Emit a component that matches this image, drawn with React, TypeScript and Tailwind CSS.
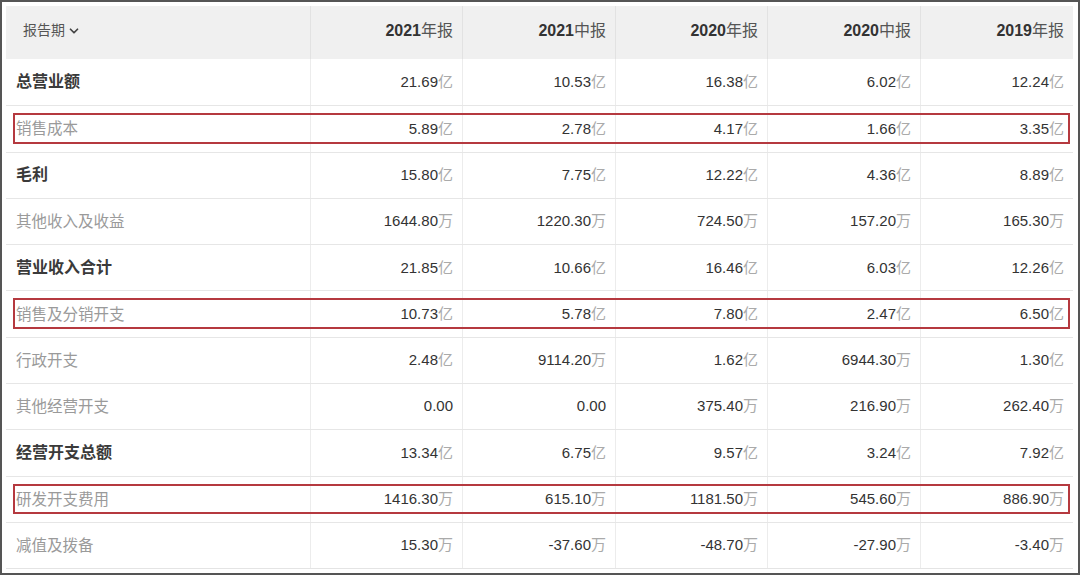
import { ChevronDown } from "lucide-react";

type Row = {
    label: string;
    bold?: boolean;
    boxed?: boolean;
    values: [string, string][];
};

const periods = [
    ["2021", "年报"],
    ["2021", "中报"],
    ["2020", "年报"],
    ["2020", "中报"],
    ["2019", "年报"]
];

const rows: Row[] = [
    { label: "总营业额", bold: true, values: [["21.69", "亿"], ["10.53", "亿"], ["16.38", "亿"], ["6.02", "亿"], ["12.24", "亿"]] },
    { label: "销售成本", boxed: true, values: [["5.89", "亿"], ["2.78", "亿"], ["4.17", "亿"], ["1.66", "亿"], ["3.35", "亿"]] },
    { label: "毛利", bold: true, values: [["15.80", "亿"], ["7.75", "亿"], ["12.22", "亿"], ["4.36", "亿"], ["8.89", "亿"]] },
    { label: "其他收入及收益", values: [["1644.80", "万"], ["1220.30", "万"], ["724.50", "万"], ["157.20", "万"], ["165.30", "万"]] },
    { label: "营业收入合计", bold: true, values: [["21.85", "亿"], ["10.66", "亿"], ["16.46", "亿"], ["6.03", "亿"], ["12.26", "亿"]] },
    { label: "销售及分销开支", boxed: true, values: [["10.73", "亿"], ["5.78", "亿"], ["7.80", "亿"], ["2.47", "亿"], ["6.50", "亿"]] },
    { label: "行政开支", values: [["2.48", "亿"], ["9114.20", "万"], ["1.62", "亿"], ["6944.30", "万"], ["1.30", "亿"]] },
    { label: "其他经营开支", values: [["0.00", ""], ["0.00", ""], ["375.40", "万"], ["216.90", "万"], ["262.40", "万"]] },
    { label: "经营开支总额", bold: true, values: [["13.34", "亿"], ["6.75", "亿"], ["9.57", "亿"], ["3.24", "亿"], ["7.92", "亿"]] },
    { label: "研发开支费用", boxed: true, values: [["1416.30", "万"], ["615.10", "万"], ["1181.50", "万"], ["545.60", "万"], ["886.90", "万"]] },
    { label: "减值及拨备", values: [["15.30", "万"], ["-37.60", "万"], ["-48.70", "万"], ["-27.90", "万"], ["-3.40", "万"]] }
];

const gridCols = "grid grid-cols-[305px_152px_153px_152px_153px_152px]";

const App = () => {
    return (
        <div
            className="w-[1080px] h-[575px] overflow-hidden bg-white border-2 border-[#555] pt-1 pl-1"
            style={{ fontFamily: '"Liberation Sans", Arial, "Noto Sans CJK SC", sans-serif' }}
        >
            <div className="w-[1067px] border-b border-[#e4e4e4]">
                {/* header */}
                <div className={`${gridCols} h-[53px] bg-[#f0f0f0]`}>
                    <div className="flex items-center pl-[17px] pb-1 text-[14px] text-[#555] border-r border-[#e2e2e2]">
                        报告期
                        <ChevronDown size={14} strokeWidth={3} className="ml-[2px] text-[#444]" />
                    </div>
                    {periods.map(([year, kind], i) => (
                        <div
                            key={i}
                            className={`flex items-center justify-end pr-[9px] pb-1 text-[16px] ${i < periods.length - 1 ? "border-r border-[#e2e2e2]" : ""}`}
                        >
                            <span className="font-bold text-[#333]">{year}</span>
                            <span className="text-[#555]">{kind}</span>
                        </div>
                    ))}
                </div>

                {rows.map((row, index) => (
                    <div
                        key={index}
                        className={`relative ${gridCols} h-[46.3px] ${index === 0 ? "" : "border-t border-[#e6e6e6]"}`}
                    >
                        <div
                            className={`flex items-center pl-[10px] border-r border-[#ececec] ${row.bold ? "text-[16px] font-bold text-[#3a3a3a]" : "text-[15.5px] text-[#9a9a9a]"}`}
                        >
                            {row.label}
                        </div>
                        {row.values.map(([num, unit], i) => (
                            <div
                                key={i}
                                className={`flex items-center justify-end pr-[9px] text-[15px] ${i < row.values.length - 1 ? "border-r border-[#ececec]" : ""}`}
                            >
                                <span className="text-[#333]">{num}</span>
                                {unit && <span className="text-[#aaa]">{unit}</span>}
                            </div>
                        ))}
                        {row.boxed && (
                            <div className="absolute left-[7px] right-[3px] top-[7px] bottom-[8px] border-2 border-[#b5393f] pointer-events-none" />
                        )}
                    </div>
                ))}
            </div>
        </div>
    );
};

export default App;
